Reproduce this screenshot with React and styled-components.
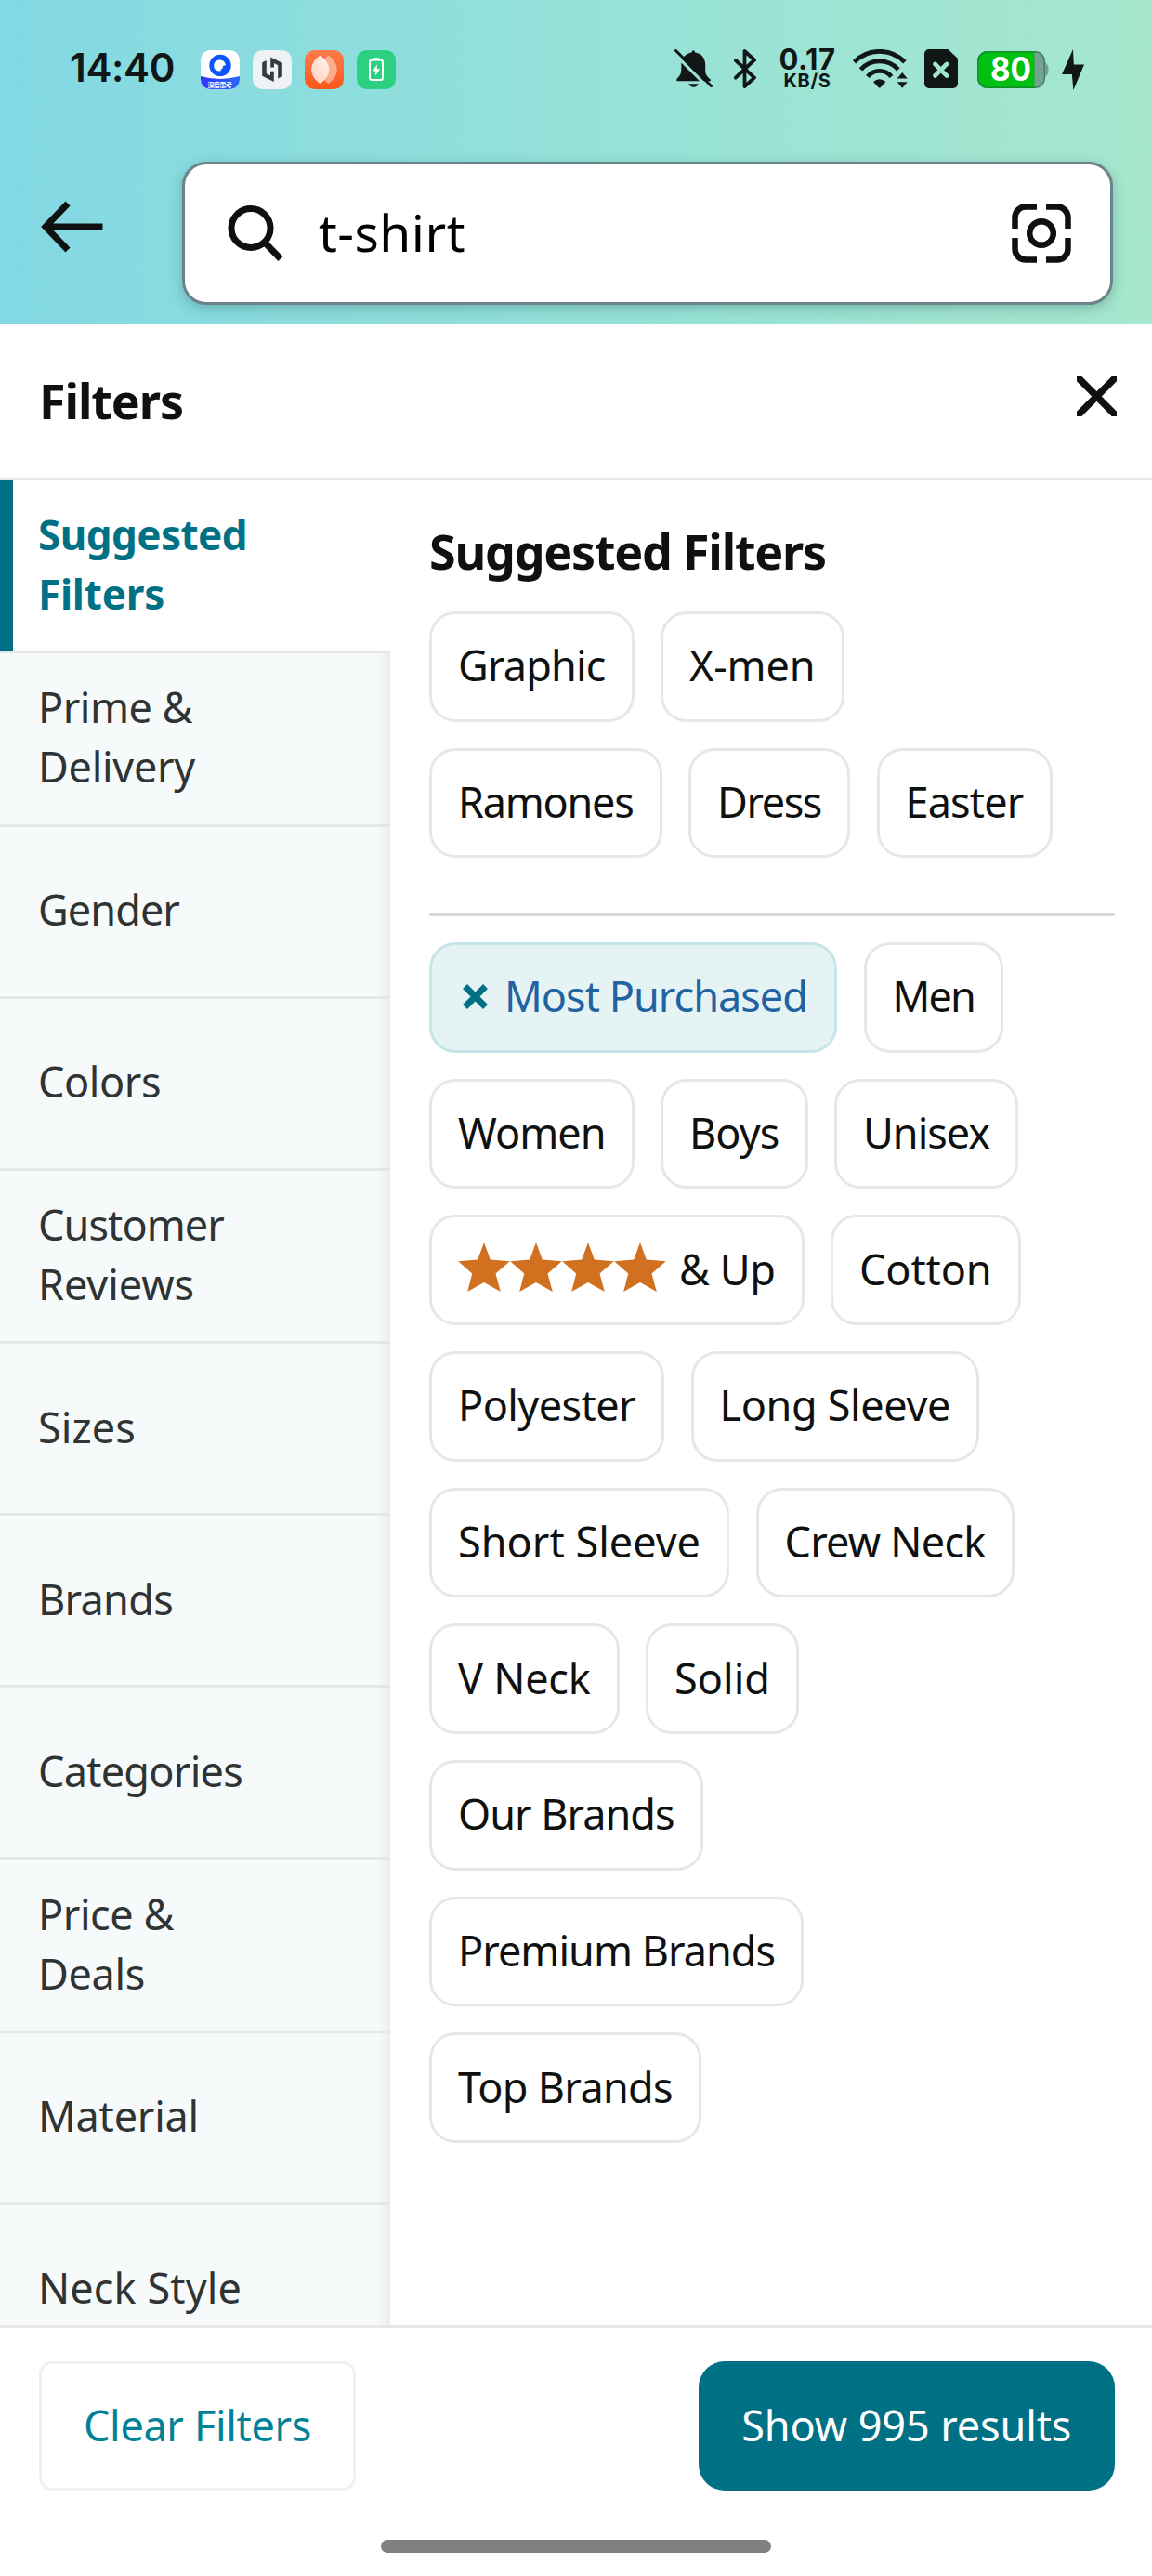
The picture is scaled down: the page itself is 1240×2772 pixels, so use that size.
import React, { useLayoutEffect, useRef, useState } from "react";
import styled, { createGlobalStyle, css } from "styled-components";

const INK = "#0f1111";
const TEAL = "#007185";

const GlobalStyle = createGlobalStyle`
  *, *::before, *::after { box-sizing: border-box; }
  body {
    margin: 0;
    background: #fff;
    color: ${INK};
    font-family: "Noto Sans", "Open Sans", sans-serif;
    font-size: 45px;
  }
  svg { display: block; flex: none; }
`;

/* Tracks a label so that it fills the given advance width. */
const Label = styled.span`
  display: inline-block;
  white-space: nowrap;
`;

function FitText({ width, children }) {
  const ref = useRef(null);
  const [spacing, setSpacing] = useState(0);
  useLayoutEffect(() => {
    const el = ref.current;
    el.style.letterSpacing = "0px";
    const natural = el.getBoundingClientRect().width;
    const next = (width - natural) / children.length;
    el.style.letterSpacing = `${next}px`;
    setSpacing(next);
  }, [width, children]);
  return (
    <Label ref={ref} style={{ letterSpacing: `${spacing}px` }}>
      {children}
    </Label>
  );
}

const Screen = styled.div`
  display: flex;
  flex-direction: column;
  width: 1240px;
  height: 2772px;
  overflow: hidden;
  background: #fff;
`;

const TopBar = styled.header`
  flex: none;
  height: 349px;
  overflow: hidden;
  background: linear-gradient(90deg, #82d8e3 0%, #95e1d9 50%, #a6e7cd 100%);
`;

const StatusBar = styled.div`
  display: flex;
  align-items: center;
  justify-content: space-between;
  height: 150px;
  padding: 0 73px 0 75px;
  color: #101716;
  font-family: Inter, Roboto, sans-serif;
`;

const StatusGroup = styled.div`
  display: flex;
  align-items: center;
`;

const Clock = styled.span`
  width: 141px;
  padding-bottom: 4px;
  font-size: 42px;
  font-weight: 600;
  line-height: 52px;
`;

const AppIcons = styled.div`
  display: flex;
  gap: 14px;
`;

const StatusIcon = styled.span`
  margin-left: ${(p) => p.$gap}px;
  margin-top: ${(p) => p.$shift || 0}px;
`;

const Speed = styled.div`
  display: flex;
  flex-direction: column;
  align-items: center;
  width: 62px;
  margin: -2px 0 0 24px;
`;

const SpeedValue = styled.span`
  font-size: 31px;
  font-weight: 700;
  line-height: 24px;
`;

const SpeedUnit = styled.span`
  margin-top: 2px;
  font-size: 20px;
  font-weight: 700;
  line-height: 19px;
`;

const SearchRow = styled.div`
  display: flex;
  align-items: center;
  justify-content: space-between;
  padding: 24px 42px 0 44px;
`;

const BackButton = styled.span`
  margin-top: -14px;
`;

const SearchBox = styled.div`
  display: flex;
  align-items: center;
  width: 1002px;
  height: 154px;
  padding: 0 42px 0 44.5px;
  background: #fff;
  border: 3px solid #6a8489;
  border-radius: 26px;
  box-shadow: 0 4px 14px rgba(30, 80, 80, 0.3);
`;

const Query = styled.span`
  flex: 1;
  margin: -2px 0 0 37.5px;
  color: #000;
  font-size: 55px;
  line-height: 76px;
`;

const SheetHeader = styled.div`
  display: flex;
  flex: none;
  align-items: center;
  justify-content: space-between;
  height: 168px;
  padding: 0 38px 0 42px;
  border-bottom: 3px solid #e7e7e7;
`;

const Title = styled.h1`
  margin: 0 0 2px;
  font-size: 52px;
  font-weight: 700;
  line-height: 70px;
`;

const CloseButton = styled.span`
  margin-top: -11px;
`;

const Body = styled.div`
  display: flex;
  flex: 1;
  min-height: 0;
  overflow: hidden;
`;

const Sidebar = styled.nav`
  flex: none;
  width: 420px;
`;

const Tab = styled.div`
  display: flex;
  flex-direction: column;
  align-items: flex-start;
  justify-content: center;
  height: ${(p) => (p.$tall ? 186.67 : 185)}px;
  padding: 0 0 3px 41px;
  border-bottom: 3px solid #e3e7e7;
  background: linear-gradient(to left, #eaeeee 0, #f6fafb 14px);
  color: #2f3333;
  line-height: 64px;
  ${(p) =>
    p.$active &&
    css`
      height: 186px;
      padding-left: 41px;
      background: linear-gradient(to right, ${TEAL} 14px, #fff 14px);
      background-clip: padding-box;
      color: ${TEAL};
      font-size: 44px;
      font-weight: 700;
    `}
`;

const Panel = styled.main`
  flex: 1;
  padding: 41px 40px 0 42px;
`;

const Heading = styled.h2`
  margin: 0 0 30px;
  font-size: 52px;
  font-weight: 700;
  line-height: 70px;
`;

const ChipList = styled.div`
  display: flex;
  flex-wrap: wrap;
  row-gap: 28px;
`;

const ChipBox = styled.div`
  display: flex;
  align-items: center;
  width: ${(p) => p.$width}px;
  height: 118.7px;
  margin-right: 28.5px;
  padding: 0 0 2px 28px;
  border: 3px solid ${(p) => (p.$selected ? "#c6e5e8" : "#e7e7e7")};
  border-radius: 28px;
  background: ${(p) => (p.$selected ? "#e6f3f5" : "#fff")};
  color: ${(p) => (p.$selected ? "#2162a1" : INK)};
  line-height: 64px;
`;

const RemoveMark = styled.span`
  margin: 0 18px 0 5px;
`;

const Stars = styled.span`
  display: flex;
  margin: -4px 14px 0 0;
`;

const Divider = styled.hr`
  height: 3px;
  margin: 59.6px 0 28px;
  border: 0;
  background: #d5d9d9;
`;

const Footer = styled.footer`
  display: flex;
  flex: none;
  align-items: flex-start;
  justify-content: space-between;
  height: 231px;
  padding: 36px 40px 0 42px;
  border-top: 3px solid #e7e7e7;
`;

const Button = styled.button`
  display: flex;
  align-items: center;
  justify-content: center;
  width: ${(p) => (p.$primary ? 448.5 : 341)}px;
  height: 139px;
  padding: 0 0 3px;
  border: ${(p) => (p.$primary ? "0" : "3px solid #f0f0f0")};
  border-radius: ${(p) => (p.$primary ? 28 : 14)}px;
  background: ${(p) => (p.$primary ? TEAL : "#fff")};
  color: ${(p) => (p.$primary ? "#fff" : "#008296")};
  font: inherit;
`;

const GestureArea = styled.div`
  display: flex;
  flex: none;
  justify-content: center;
  height: 39px;
`;

const GestureBar = styled.div`
  width: 420px;
  height: 14px;
  border-radius: 7px;
  background: #808080;
`;

/* Launcher icons of the running apps */

const QuarkIcon = () => (
  <svg width="42" height="42" viewBox="0 0 42 42">
    <defs>
      <clipPath id="tile"><rect width="42" height="42" rx="10.5" /></clipPath>
      <linearGradient id="band" x1="0" x2="1">
        <stop offset="0" stopColor="#3432ff" />
        <stop offset="1" stopColor="#2a6af5" />
      </linearGradient>
    </defs>
    <g clipPath="url(#tile)">
      <rect width="42" height="42" fill="#fff" />
      <circle cx="21" cy="16.4" r="11.7" fill="#0d53ff" />
      <path d="M21 10.6a5.9 5.9 0 0 1 5.9 5.6c-2.4 0-3 .8-3.200 2.200-.2 1.400-.9 2-2 2.200V22.300a6 6 0 1 1-.7-11.700z" fill="#fff" />
      <path d="M0 28q21 6 42 0v14H0z" fill="url(#band)" />
      <text x="7.500" y="39.600" textLength="26.500" fontSize="7" fontWeight="700" fill="#fff" fontFamily="'Noto Sans CJK SC', sans-serif">深度思考</text>
    </g>
  </svg>
);

const HexIcon = () => (
  <svg width="42" height="42" viewBox="0 0 42 42">
    <rect width="42" height="42" rx="10.5" fill="#eff1f4" />
    <g fill="#363b3f">
      <path id="hex-half" d="M10.200 13.200L14.800 11V25.200L19 27.300V22.800H22.800V34L10.200 27.700z" />
      <use href="#hex-half" transform="rotate(180 21 20.700)" />
    </g>
  </svg>
);

const PetalIcon = () => (
  <svg width="42" height="42" viewBox="0 0 42 42">
    <defs>
      <linearGradient id="ember" x1="0" y1="0" x2="0" y2="1">
        <stop offset="0" stopColor="#ff7b4b" />
        <stop offset="1" stopColor="#f9581b" />
      </linearGradient>
      <linearGradient id="petal" x1="1" y1="0" x2="0.2" y2="1">
        <stop offset="0" stopColor="#fff5f1" />
        <stop offset="1" stopColor="#ffd3c2" />
      </linearGradient>
    </defs>
    <rect width="42" height="42" rx="10.5" fill="url(#ember)" />
    <path d="M25.300 5.500C38 15 38 27 25.300 36 14 27 14 15 25.300 5.500z" fill="#ffc3ab" opacity="0.75" />
    <path d="M16.500 5.500C29.500 15 29.500 27 16.500 36 4 27 4 15 16.500 5.500z" fill="url(#petal)" />
  </svg>
);

const ChargeIcon = () => (
  <svg width="42" height="42" viewBox="0 0 42 42">
    <rect width="42" height="42" rx="10.5" fill="#2bd181" />
    <rect x="17.300" y="8.300" width="7.400" height="3" rx="1.200" fill="#fff" />
    <rect x="14" y="10.500" width="14" height="21.600" rx="2.500" fill="none" stroke="#fff" strokeWidth="2" />
    <path d="M22 15.500L17 22.500H20.200L20 27.500 25.200 20.200H21.800z" fill="#fff" />
  </svg>
);

/* System status icons */

const BellOffIcon = () => (
  <svg width="41" height="41" viewBox="0 0 41 41">
    <mask id="bell-cut">
      <rect width="41" height="41" fill="#fff" />
      <path d="M-2 3L37 42" stroke="#000" strokeWidth="3.200" />
    </mask>
    <g mask="url(#bell-cut)">
      <path d="M20.300 1.300c1.100 0 1.600 1 1.700 2.200C29 4.300 33.200 9.500 33.200 16.500V23c0 4.500 2 6.500 5.600 9.500L39 34.200H2.300l.2-2.500C6 28.500 7.300 26 7.300 22v-5.500C7.300 9.500 12 4.600 18.600 3.500c.1-1.200.600-2.200 1.700-2.200z" fill="currentColor" />
      <path d="M15.300 37.200h10.600c-1.400 4.600-9.200 4.600-10.600 0z" fill="currentColor" />
    </g>
    <path d="M1.500 1.500L39.500 39.500" stroke="currentColor" strokeWidth="3" strokeLinecap="round" />
  </svg>
);

const BluetoothIcon = () => (
  <svg width="24" height="42" viewBox="0 0 24 42">
    <path d="M1.800 12L22 30.700 11.500 40V2L22 11.500 1.800 30.700" fill="none" stroke="currentColor" strokeWidth="3.800" strokeLinejoin="round" strokeLinecap="round" />
  </svg>
);

const WifiIcon = () => (
  <svg width="59" height="42" viewBox="0 0 59 42">
    <g fill="none" stroke="currentColor" strokeWidth="4.800">
      <path d="M1.500 13.800A38 38 0 0 1 55.900 13.800" />
      <path d="M8.500 21.800A27.200 27.200 0 0 1 48.900 21.800" />
      <path d="M15.900 29.500A16.500 16.500 0 0 1 41.500 29.500" />
    </g>
    <path d="M22 35q6.700-5.600 13.400 0l-5.500 6q-1.200 1.200-2.400 0z" fill="currentColor" />
    <path d="M53.200 25l5.500 6.500h-11zM53.200 41.700l5.500-6.500h-11z" fill="currentColor" />
  </svg>
);

const SimIcon = () => (
  <svg width="36" height="42" viewBox="0 0 36 42">
    <path d="M5 0H25.500L36 10V37a5 5 0 0 1-5 5H5a5 5 0 0 1-5-5V5a5 5 0 0 1 5-5z" fill="currentColor" />
    <path d="M11.500 16l12.500 12.500M24 16L11.500 28.500" stroke="#a1e5d0" strokeWidth="4.600" strokeLinecap="round" />
  </svg>
);

const BatteryIcon = () => (
  <svg width="77" height="40" viewBox="0 0 77 40">
    <defs>
      <clipPath id="cell"><rect x="0" y="0" width="73" height="40" rx="11" /></clipPath>
    </defs>
    <path d="M71 12h2q1.500 0 1.500 2 2 1 2 3v6q0 2-2 3 0 2-1.500 2h-2z" fill="#76a192" />
    <g clipPath="url(#cell)">
      <rect width="73" height="40" fill="#76a192" />
      <rect width="61.500" height="40" fill="#00c012" />
    </g>
    <rect x="0.700" y="0.700" width="71.600" height="38.600" rx="10.500" fill="none" stroke="#1d6a3a" strokeOpacity="0.6" strokeWidth="1.400" />
    <text x="14" y="32.400" textLength="44" lengthAdjust="spacingAndGlyphs" fontSize="35" fontWeight="700" fill="#fff" fontFamily="Inter, Roboto, sans-serif">80</text>
  </svg>
);

const BoltIcon = () => (
  <svg width="24" height="44" viewBox="0 0 24 44">
    <path d="M12 0L0 27H10.800L12.400 44 24 16.500H12.800z" fill="currentColor" />
  </svg>
);

/* Page icons */

const ArrowLeftIcon = () => (
  <svg width="68" height="56" viewBox="0 0 68 56">
    <path d="M29 3L5 28 29 53M5 28H66.500" fill="none" stroke={INK} strokeWidth="7" />
  </svg>
);

const SearchIcon = () => (
  <svg width="62" height="62" viewBox="0 0 62 62">
    <circle cx="26" cy="25.500" r="21" fill="none" stroke={INK} strokeWidth="7" />
    <path d="M41 41L58 58.500" stroke={INK} strokeWidth="7" />
  </svg>
);

const LensIcon = () => (
  <svg width="64" height="64" viewBox="0 0 64 64">
    <g fill="none" stroke={INK} strokeWidth="6.500">
      <path d="M27 3.500H15A11.500 11.500 0 0 0 3.500 15V27M37 3.500H49A11.500 11.500 0 0 1 60.500 15V27M27 60.500H15A11.500 11.500 0 0 1 3.500 49V37M37 60.500H49A11.500 11.500 0 0 0 60.500 49V37" />
      <circle cx="32" cy="32" r="12.800" />
    </g>
  </svg>
);

const CloseIcon = () => (
  <svg width="43" height="43" viewBox="0 0 43 43">
    <path d="M2.500 2.500L40.500 40.500M40.500 2.500L2.500 40.500" stroke={INK} strokeWidth="7.600" strokeLinecap="square" />
  </svg>
);

const RemoveIcon = () => (
  <svg width="27" height="27" viewBox="0 0 27 27">
    <path d="M2.500 2.500L24.500 24.500M24.500 2.500L2.500 24.500" stroke={TEAL} strokeWidth="7" />
  </svg>
);

const StarIcon = () => (
  <svg width="56" height="53" viewBox="0 0 56 53">
    <path d="M28 0L34.800 18.500 55.800 20.300 40.500 33.500 45.800 53 28 43 10.200 53 15.200 33.500 0.200 20.300 21.200 18.500z" fill="#d1711f" />
  </svg>
);

const TABS = [
  { active: true, lines: [["Suggested", 225], ["Filters", 136]] },
  { lines: [["Prime &", 166], ["Delivery", 169]] },
  { lines: [["Gender", 152]] },
  { lines: [["Colors", 132]] },
  { lines: [["Customer", 200], ["Reviews", 168]] },
  { lines: [["Sizes", 105]] },
  { lines: [["Brands", 145]] },
  { lines: [["Categories", 220]] },
  { lines: [["Price &", 146], ["Deals", 115]] },
  { lines: [["Material", 173]] },
  { lines: [["Neck Style", 219]] },
];

const KEYWORDS = [
  ["Graphic", 220.5],
  ["X-men", 197.5],
  ["Ramones", 250.5],
  ["Dress", 174],
  ["Easter", 189],
];

const REFINEMENTS = [
  ["Men", 150.5],
  ["Women", 220.5],
  ["Boys", 158.5],
  ["Unisex", 198],
  ["& Up", 403.5, 4],
  ["Cotton", 204.5],
  ["Polyester", 253],
  ["Long Sleeve", 310.5],
  ["Short Sleeve", 323],
  ["Crew Neck", 278],
  ["V Neck", 204.5],
  ["Solid", 165],
  ["Our Brands", 294.5],
  ["Premium Brands", 403],
  ["Top Brands", 293],
];

function Chip({ label, width, stars = 0 }) {
  const taken = stars ? stars * 56 + 14 : 0;
  return (
    <ChipBox $width={width}>
      {stars > 0 && (
        <Stars>
          {Array.from({ length: stars }, (_, i) => (
            <StarIcon key={i} />
          ))}
        </Stars>
      )}
      <FitText width={width - 62 - taken}>{label}</FitText>
    </ChipBox>
  );
}

export default function App() {
  return (
    <>
      <GlobalStyle />
      <Screen>
        <TopBar>
          <StatusBar>
            <StatusGroup>
              <Clock><FitText width={113}>14:40</FitText></Clock>
              <AppIcons>
                <QuarkIcon />
                <HexIcon />
                <PetalIcon />
                <ChargeIcon />
              </AppIcons>
            </StatusGroup>
            <StatusGroup>
              <StatusIcon $shift={-3}><BellOffIcon /></StatusIcon>
              <StatusIcon $gap={23} $shift={-2}><BluetoothIcon /></StatusIcon>
              <Speed>
                <SpeedValue><FitText width={61}>0.17</FitText></SpeedValue>
                <SpeedUnit><FitText width={51}>KB/S</FitText></SpeedUnit>
              </Speed>
              <StatusIcon $gap={18} $shift={-2}><WifiIcon /></StatusIcon>
              <StatusIcon $gap={18} $shift={-2}><SimIcon /></StatusIcon>
              <StatusIcon $gap={21}><BatteryIcon /></StatusIcon>
              <StatusIcon $gap={14}><BoltIcon /></StatusIcon>
            </StatusGroup>
          </StatusBar>
          <SearchRow>
            <BackButton><ArrowLeftIcon /></BackButton>
            <SearchBox>
              <SearchIcon />
              <Query><FitText width={158}>t-shirt</FitText></Query>
              <LensIcon />
            </SearchBox>
          </SearchRow>
        </TopBar>

        <SheetHeader>
          <Title><FitText width={155}>Filters</FitText></Title>
          <CloseButton><CloseIcon /></CloseButton>
        </SheetHeader>

        <Body>
          <Sidebar>
            {TABS.map(({ active, lines }) => (
              <Tab key={lines[0][0]} $active={active} $tall={lines.length > 1}>
                {lines.map(([text, width]) => (
                  <FitText key={text} width={width}>{text}</FitText>
                ))}
              </Tab>
            ))}
          </Sidebar>
          <Panel>
            <Heading><FitText width={427}>Suggested Filters</FitText></Heading>
            <ChipList>
              {KEYWORDS.map(([label, width]) => (
                <Chip key={label} label={label} width={width} />
              ))}
            </ChipList>
            <Divider />
            <ChipList>
              <ChipBox $width={439} $selected>
                <RemoveMark><RemoveIcon /></RemoveMark>
                <FitText width={326}>Most Purchased</FitText>
              </ChipBox>
              {REFINEMENTS.map(([label, width, stars]) => (
                <Chip key={label} label={label} width={width} stars={stars} />
              ))}
            </ChipList>
          </Panel>
        </Body>

        <Footer>
          <Button><FitText width={245}>Clear Filters</FitText></Button>
          <Button $primary><FitText width={355}>Show 995 results</FitText></Button>
        </Footer>
        <GestureArea>
          <GestureBar />
        </GestureArea>
      </Screen>
    </>
  );
}
